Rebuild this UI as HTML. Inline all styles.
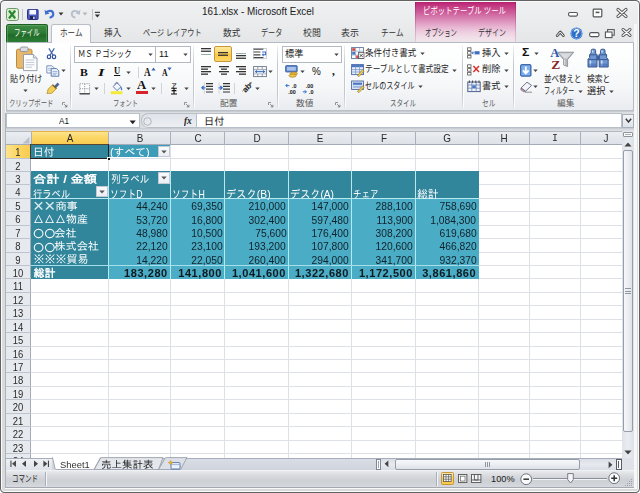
<!DOCTYPE html>
<html lang="ja"><head><meta charset="utf-8"><title>161.xlsx - Microsoft Excel</title>
<style>
html,body{margin:0;padding:0;background:#fff;}
body{width:640px;height:493px;overflow:hidden;position:relative;font-family:"Liberation Sans","Noto Sans CJK JP",sans-serif;}
#w{position:absolute;left:0;top:0;width:640px;height:493px;overflow:hidden;filter:blur(0.35px);}
#w div,#w span.t,#w svg{position:absolute;}
#w div{box-sizing:border-box;}
span.t{white-space:nowrap;display:block;}
</style></head>
<body><div id="w">
<div style="left:0px;top:0px;width:640px;height:493px;border-radius:4.5px;background:#636363;"></div>
<div style="left:0.8px;top:0.8px;width:638.4px;height:491.4px;border-radius:3.7px;background:#fbfbfb;"></div>
<div style="left:2.1px;top:2.1px;width:635.8px;height:488.9px;border-radius:2.6px;background:linear-gradient(#eff0f1 0px,#e9ebed 22px,#e3e5e7 45px,#dcdddf 115px,#d9dadc 100%);"></div>
<div style="left:4.6px;top:24px;width:0.8px;height:464px;background:#f3f3f4;"></div>
<div style="left:634.4px;top:24px;width:2.5px;height:464.6px;background:#f7f7f8;"></div>
<div style="left:5px;top:487.8px;width:632px;height:1.5px;background:#f8f8f9;"></div>
<span id="t1" class="t" style="left:202px;top:3.90px;height:15px;line-height:15px;font-size:11px;color:#1a1a1a;font-weight:normal;transform:scaleX(0.8981);transform-origin:0 50%;">161.xlsx  -  Microsoft Excel</span>
<svg style="left:566px;top:9px" width="14" height="10" viewBox="0 0 14 10"><rect x="2.5" y="3.5" width="9" height="3.6" rx="1.5" fill="#fff" stroke="#555" stroke-width="1.1"/></svg>
<svg style="left:591px;top:7px" width="13" height="12" viewBox="0 0 13 12"><rect x="2.2" y="2.2" width="8.6" height="7.6" rx="0.8" fill="#fff" stroke="#555" stroke-width="1.2"/><rect x="4.6" y="4.6" width="3.8" height="1.6" fill="#555"/></svg>
<svg style="left:615px;top:7px" width="14" height="12" viewBox="0 0 14 12"><path d="M3 2.5 L11 9.5 M11 2.5 L3 9.5" stroke="#555" stroke-width="3.2" stroke-linecap="round"/><path d="M3 2.5 L11 9.5 M11 2.5 L3 9.5" stroke="#fff" stroke-width="1.3" stroke-linecap="round"/></svg>
<svg style="left:6px;top:7.5px" width="13" height="13" viewBox="0 0 13 13"><rect x="0.6" y="0.6" width="11.8" height="11.8" rx="1.8" fill="#eef6ea" stroke="#5f9552" stroke-width="1"/><rect x="1.8" y="1.8" width="9.4" height="9.4" rx="0.8" fill="#d3ebcb"/><path d="M3 2.6 L9.2 10.4 M9.2 2.6 L3 10.4" stroke="#2c8630" stroke-width="2.3"/><path d="M10.4 2.4 V10.6" stroke="#f4faf2" stroke-width="1"/></svg>
<div style="left:22.3px;top:9px;width:1px;height:11px;background:#c4c4c4;"></div>
<svg style="left:27px;top:8.5px" width="12" height="11" viewBox="0 0 12 11"><rect x="0.5" y="0.5" width="10.6" height="10" rx="0.8" fill="#4a5bbd" stroke="#2c3688" stroke-width="1"/><rect x="2.4" y="0.9" width="6.6" height="4.6" fill="#f4f6ff"/><rect x="3" y="7" width="5.4" height="3.4" fill="#1d2460"/><rect x="6.2" y="7.6" width="1.4" height="2.4" fill="#e8e8f8"/></svg>
<svg style="left:43.5px;top:8px" width="12" height="11" viewBox="0 0 12 11"><path d="M2.2 4.6 C4.5 2.2 8.8 2.2 9.2 5.6 C9.4 7.8 7.6 9.2 5.6 9.6" fill="none" stroke="#3d6fd0" stroke-width="2.2"/><path d="M0.6 1.8 L1.2 6.8 L5.6 5.4 Z" fill="#3d6fd0"/></svg>
<svg style="left:57.5px;top:11.5px" width="6" height="4" viewBox="0 0 6 4"><path d="M0.6 0.6 L5.4 0.6 L3 3.4 Z" fill="#333"/></svg>
<svg style="left:68.5px;top:8px" width="12" height="11" viewBox="0 0 12 11"><path d="M9.8 4.6 C7.5 2.2 3.2 2.2 2.8 5.6 C2.6 7.8 4.4 9.2 6.4 9.6" fill="none" stroke="#b9c0cc" stroke-width="2"/><path d="M11.4 1.8 L10.8 6.8 L6.4 5.4 Z" fill="#b9c0cc"/></svg>
<svg style="left:82px;top:11.5px" width="6" height="4" viewBox="0 0 6 4"><path d="M0.6 0.6 L5.4 0.6 L3 3.4 Z" fill="#b5b5b5"/></svg>
<div style="left:91.6px;top:9px;width:1px;height:11px;background:#c4c4c4;"></div>
<svg style="left:94px;top:10.5px" width="7" height="8" viewBox="0 0 7 8"><rect x="0.8" y="0.8" width="5.2" height="1.1" fill="#333"/><path d="M0.8 3.4 L6 3.4 L3.4 6.4 Z" fill="#333"/></svg>
<div style="left:415px;top:1.5px;width:101px;height:41px;background:linear-gradient(#b5206f 0px,#c2357f 3px,#cc5a98 10px,#d985b3 17px,#e6b0cf 24px,#efd2e2 31px,#f1e2ea 37px,#f0e6ec 41px);"></div>
<div style="left:415px;top:1.5px;width:1px;height:41px;background:linear-gradient(#a01a63,#d9a5c2 70%,#e6cbd9);"></div>
<div style="left:515px;top:1.5px;width:1px;height:41px;background:linear-gradient(#a01a63,#d9a5c2 70%,#e6cbd9);"></div>
<span id="t2" class="t" style="left:423px;top:5.10px;height:13px;line-height:13px;font-size:9px;color:#fff;font-weight:normal;transform:scaleX(0.8220);transform-origin:0 50%;">ピボットテーブル ツール</span>
<div style="left:5.6px;top:24px;width:42.6px;height:18.6px;border-radius:2.5px 2.5px 0 0;background:linear-gradient(#3f8b45 0%,#2c7a33 45%,#1f6a27 55%,#2f8038 100%);border:1px solid #1d5e24;border-bottom:none;box-shadow:inset 0 0 0 0.6px rgba(180,230,180,.45);"></div>
<span id="t3" class="t" style="left:14px;top:26.70px;height:13px;line-height:13px;font-size:9px;color:#fff;font-weight:normal;transform:scaleX(0.7108);transform-origin:0 50%;">ファイル</span>
<div style="left:51px;top:24.4px;width:40px;height:19px;border-radius:2.5px 2.5px 0 0;background:#fcfcfd;border:1px solid #b9bfc7;border-bottom:none;"></div>
<span id="t4" class="t" style="left:60.3px;top:26.70px;height:13px;line-height:13px;font-size:9px;color:#333;font-weight:normal;transform:scaleX(0.8416);transform-origin:0 50%;">ホーム</span>
<span id="t5" class="t" style="left:104px;top:26.70px;height:13px;line-height:13px;font-size:9px;color:#333;font-weight:normal;transform:scaleX(0.9603);transform-origin:0 50%;">挿入</span>
<span id="t6" class="t" style="left:143px;top:26.70px;height:13px;line-height:13px;font-size:9px;color:#333;font-weight:normal;transform:scaleX(0.7871);transform-origin:0 50%;">ページ レイアウト</span>
<span id="t7" class="t" style="left:222.7px;top:26.70px;height:13px;line-height:13px;font-size:9px;color:#333;font-weight:normal;transform:scaleX(0.9603);transform-origin:0 50%;">数式</span>
<span id="t8" class="t" style="left:260.7px;top:26.70px;height:13px;line-height:13px;font-size:9px;color:#333;font-weight:normal;transform:scaleX(0.7884);transform-origin:0 50%;">データ</span>
<span id="t9" class="t" style="left:302.8px;top:26.70px;height:13px;line-height:13px;font-size:9px;color:#333;font-weight:normal;transform:scaleX(0.9880);transform-origin:0 50%;">校閲</span>
<span id="t10" class="t" style="left:341.4px;top:26.70px;height:13px;line-height:13px;font-size:9px;color:#333;font-weight:normal;transform:scaleX(0.9880);transform-origin:0 50%;">表示</span>
<span id="t11" class="t" style="left:380.5px;top:26.70px;height:13px;line-height:13px;font-size:9px;color:#333;font-weight:normal;transform:scaleX(0.8416);transform-origin:0 50%;">チーム</span>
<span id="t12" class="t" style="left:425px;top:26.70px;height:13px;line-height:13px;font-size:9px;color:#333;font-weight:normal;transform:scaleX(0.7109);transform-origin:0 50%;">オプション</span>
<span id="t13" class="t" style="left:478px;top:26.70px;height:13px;line-height:13px;font-size:9px;color:#333;font-weight:normal;transform:scaleX(0.7774);transform-origin:0 50%;">デザイン</span>
<svg style="left:555px;top:28.5px" width="11" height="9" viewBox="0 0 11 9"><path d="M2.2 6.6 L5.3 3 L8.4 6.6" fill="none" stroke="#555" stroke-width="2.8" stroke-linejoin="round" stroke-linecap="round"/><path d="M2.2 6.6 L5.3 3 L8.4 6.6" fill="none" stroke="#fff" stroke-width="1" stroke-linejoin="round" stroke-linecap="round"/></svg>
<svg style="left:569.5px;top:26.8px" width="13" height="13" viewBox="0 0 13 13"><circle cx="6.5" cy="6.5" r="6" fill="#2f6fc6"/><circle cx="6.5" cy="6.5" r="5.2" fill="none" stroke="#7fb0ee" stroke-width="0.8"/><text x="6.5" y="10.2" font-size="10.5" font-weight="bold" fill="#fff" text-anchor="middle" font-family="Liberation Sans,sans-serif">?</text></svg>
<svg style="left:587.5px;top:30.5px" width="13" height="8" viewBox="0 0 13 8"><rect x="1.6" y="1.6" width="9.4" height="4" rx="1.6" fill="#fff" stroke="#555" stroke-width="1.1"/></svg>
<svg style="left:604px;top:27.5px" width="12" height="11" viewBox="0 0 12 11"><rect x="3.6" y="1.6" width="6.6" height="5.6" fill="#fff" stroke="#555" stroke-width="1.1"/><rect x="1.4" y="4" width="6.6" height="5.6" fill="#fff" stroke="#555" stroke-width="1.1"/></svg>
<svg style="left:619.5px;top:26.5px" width="13" height="11" viewBox="0 0 13 11"><path d="M3 2.5 L10 8.5 M10 2.5 L3 8.5" stroke="#555" stroke-width="3" stroke-linecap="round"/><path d="M3 2.5 L10 8.5 M10 2.5 L3 8.5" stroke="#fff" stroke-width="1.2" stroke-linecap="round"/></svg>
<div style="left:5.6px;top:42.4px;width:628.2px;height:68.2px;background:linear-gradient(#ffffff 0px,#fcfdfd 20px,#f5f6f8 45px,#eff1f4 56px,#e9ecf0 67px);border:1px solid #b4bac3;border-radius:0 0 2px 2px;"></div>
<div style="left:52px;top:42px;width:38px;height:1.6px;background:#fdfdfe;"></div>
<div style="left:69.5px;top:45px;width:1px;height:62.5px;background:linear-gradient(rgba(190,196,205,0.2),#c3c8d0 30%,#c3c8d0 80%,rgba(190,196,205,0.3));"></div>
<div style="left:70.5px;top:45px;width:1px;height:62.5px;background:rgba(255,255,255,.8);"></div>
<div style="left:192.9px;top:45px;width:1px;height:62.5px;background:linear-gradient(rgba(190,196,205,0.2),#c3c8d0 30%,#c3c8d0 80%,rgba(190,196,205,0.3));"></div>
<div style="left:193.9px;top:45px;width:1px;height:62.5px;background:rgba(255,255,255,.8);"></div>
<div style="left:276.5px;top:45px;width:1px;height:62.5px;background:linear-gradient(rgba(190,196,205,0.2),#c3c8d0 30%,#c3c8d0 80%,rgba(190,196,205,0.3));"></div>
<div style="left:277.5px;top:45px;width:1px;height:62.5px;background:rgba(255,255,255,.8);"></div>
<div style="left:343.5px;top:45px;width:1px;height:62.5px;background:linear-gradient(rgba(190,196,205,0.2),#c3c8d0 30%,#c3c8d0 80%,rgba(190,196,205,0.3));"></div>
<div style="left:344.5px;top:45px;width:1px;height:62.5px;background:rgba(255,255,255,.8);"></div>
<div style="left:461.5px;top:45px;width:1px;height:62.5px;background:linear-gradient(rgba(190,196,205,0.2),#c3c8d0 30%,#c3c8d0 80%,rgba(190,196,205,0.3));"></div>
<div style="left:462.5px;top:45px;width:1px;height:62.5px;background:rgba(255,255,255,.8);"></div>
<div style="left:513.1px;top:45px;width:1px;height:62.5px;background:linear-gradient(rgba(190,196,205,0.2),#c3c8d0 30%,#c3c8d0 80%,rgba(190,196,205,0.3));"></div>
<div style="left:514.1px;top:45px;width:1px;height:62.5px;background:rgba(255,255,255,.8);"></div>
<svg style="left:15px;top:46px" width="24" height="26" viewBox="0 0 24 26"><rect x="1.5" y="3.2" width="15.5" height="19" rx="1.6" fill="#e9b769" stroke="#b98a3e" stroke-width="1"/>
<rect x="5.4" y="1" width="7.6" height="4.6" rx="1.4" fill="#d9dde3" stroke="#8b9099" stroke-width="0.9"/>
<path d="M8.5 8.5 H18.4 L22 12 V24.6 H8.5 Z" fill="#fdfdfe" stroke="#8d96a6" stroke-width="0.9"/>
<path d="M18.4 8.5 V12 H22" fill="#e3e8f0" stroke="#8d96a6" stroke-width="0.8"/>
<path d="M10.6 14 H19.4 M10.6 16.4 H19.4 M10.6 18.8 H19.4 M10.6 21.2 H17" stroke="#b9c2d0" stroke-width="0.9"/></svg>
<span id="t14" class="t" style="left:10px;top:72.90px;height:12.6px;line-height:12.6px;font-size:8.6px;color:#222;font-weight:normal;transform:scaleX(0.9421);transform-origin:0 50%;">貼り付け</span>
<svg style="left:23.1px;top:88.9px" width="5" height="3.4" viewBox="0 0 5 3.4"><path d="M0.3 0.4 L4.7 0.4 L2.5 3 Z" fill="#444"/></svg>
<svg style="left:46px;top:48px" width="11" height="12" viewBox="0 0 11 12"><path d="M3.2 0.8 L7 7 M8 0.8 L4.2 7" stroke="#4b6ea8" stroke-width="1.3" stroke-linecap="round"/>
<ellipse cx="3" cy="8.8" rx="1.7" ry="1.9" fill="none" stroke="#2f4f9c" stroke-width="1.2"/><ellipse cx="8" cy="8.8" rx="1.7" ry="1.9" fill="none" stroke="#2f4f9c" stroke-width="1.2"/></svg>
<svg style="left:45.5px;top:64.5px" width="14" height="12" viewBox="0 0 14 12"><path d="M0.8 0.8 H6 L8 2.8 V8 H0.8 Z" fill="#f4f7fc" stroke="#6f88b5" stroke-width="0.9"/><path d="M2 3.4 H6.4 M2 5.2 H6.4" stroke="#9ab0d4" stroke-width="0.8"/>
<path d="M5.2 3.6 H10.6 L12.8 5.8 V11.2 H5.2 Z" fill="#f4f7fc" stroke="#4f6fa8" stroke-width="0.9"/><path d="M6.6 6.4 H11.4 M6.6 8.2 H11.4 M6.6 9.8 H10" stroke="#7f9bcb" stroke-width="0.8"/></svg>
<svg style="left:60.7px;top:68.5px" width="5" height="3.4" viewBox="0 0 5 3.4"><path d="M0.3 0.4 L4.7 0.4 L2.5 3 Z" fill="#444"/></svg>
<svg style="left:45.5px;top:82px" width="14" height="13" viewBox="0 0 14 13"><path d="M8.2 4.6 L11.6 1 L13 2.4 L9.6 6 Z" fill="#4a5f9f" stroke="#2d3e78" stroke-width="0.6"/>
<path d="M2.2 7 L6.6 2.8 L10.4 6.6 L6.2 11 C4.8 11.8 2.4 11.2 1 11.6 C1.8 10.2 1.4 8.2 2.2 7 Z" fill="#f1cf5a" stroke="#b78f22" stroke-width="0.8"/><path d="M6.6 2.8 L10.4 6.6" stroke="#6f5a20" stroke-width="1.3"/></svg>
<span id="t15" class="t" style="left:9px;top:97.35px;height:12.5px;line-height:12.5px;font-size:8.5px;color:#5c5c5c;font-weight:normal;transform:scaleX(0.7460);transform-origin:0 50%;">クリップボード</span>
<svg style="left:61.5px;top:101.5px" width="6" height="6" viewBox="0 0 6 6"><path d="M0.5 3 V0.5 H3" fill="none" stroke="#888" stroke-width="0.9"/><path d="M2.2 2.2 L4.8 4.8 M4.9 2.8 V4.9 H2.8" fill="none" stroke="#777" stroke-width="0.9"/></svg>
<div style="left:74px;top:46.4px;width:81.6px;height:16.6px;background:#fff;border:1px solid #b3b9c2;"></div>
<div style="left:155px;top:46.4px;width:35.6px;height:16.6px;background:#fff;border:1px solid #b3b9c2;"></div>
<span id="t16" class="t" style="left:78.4px;top:47.50px;height:13px;line-height:13px;font-size:9px;color:#111;font-weight:normal;transform:scaleX(0.8181);transform-origin:0 50%;">ＭＳ Ｐゴシック</span>
<svg style="left:147.5px;top:53.1px" width="5" height="3.4" viewBox="0 0 5 3.4"><path d="M0.3 0.4 L4.7 0.4 L2.5 3 Z" fill="#444"/></svg>
<span id="t17" class="t" style="left:158.8px;top:47.45px;height:13.5px;line-height:13.5px;font-size:9.5px;color:#111;font-weight:normal;transform:scaleX(0.9722);transform-origin:0 50%;">11</span>
<svg style="left:182.9px;top:53.1px" width="5" height="3.4" viewBox="0 0 5 3.4"><path d="M0.3 0.4 L4.7 0.4 L2.5 3 Z" fill="#444"/></svg>
<span id="t18" class="t" style="left:79.6px;top:64.50px;height:15px;line-height:15px;font-size:11px;color:#111;font-weight:bold;font-family:'Liberation Serif',serif;transform:scaleX(1.0621);transform-origin:0 50%;">B</span>
<span id="t19" class="t" style="left:97.6px;top:64.50px;height:15px;line-height:15px;font-size:11px;color:#111;font-weight:bold;font-family:'Liberation Serif',serif;transform:scaleX(1.4949);transform-origin:0 50%;font-style:italic;">I</span>
<span id="t20" class="t" style="left:114.4px;top:64.35px;height:14.5px;line-height:14.5px;font-size:10.5px;color:#111;font-weight:bold;font-family:'Liberation Serif',serif;transform:scaleX(0.8165);transform-origin:0 50%;text-decoration:underline;">U</span>
<svg style="left:125.9px;top:70.5px" width="5" height="3.4" viewBox="0 0 5 3.4"><path d="M0.3 0.4 L4.7 0.4 L2.5 3 Z" fill="#444"/></svg>
<div style="left:137.8px;top:67px;width:1px;height:11px;background:#cfd3da;"></div>
<span id="t21" class="t" style="left:144.4px;top:64.20px;height:16px;line-height:16px;font-size:12px;color:#111;font-weight:bold;font-family:'Liberation Serif',serif;transform:scaleX(0.7611);transform-origin:0 50%;">A</span>
<svg style="left:150.5px;top:66.5px" width="5" height="4" viewBox="0 0 5 4"><path d="M0.4 3.4 L2.5 0.5 L4.6 3.4 Z" fill="#3a63b8"/></svg>
<span id="t22" class="t" style="left:162px;top:66.00px;height:14px;line-height:14px;font-size:10px;color:#111;font-weight:bold;font-family:'Liberation Serif',serif;transform:scaleX(0.7741);transform-origin:0 50%;">A</span>
<svg style="left:166.5px;top:66.5px" width="5" height="4" viewBox="0 0 5 4"><path d="M0.4 0.5 L2.5 3.4 L4.6 0.5 Z" fill="#3a63b8"/></svg>
<svg style="left:78.5px;top:82.5px" width="12" height="12" viewBox="0 0 12 12"><rect x="0.8" y="0.8" width="9.8" height="9.8" fill="#fff" stroke="#8a8f98" stroke-width="0.9" stroke-dasharray="1.2 1"/><path d="M5.7 0.8 V10.6 M0.8 5.7 H10.6" stroke="#8a8f98" stroke-width="0.9" stroke-dasharray="1.2 1"/><path d="M0.6 10.8 H10.8" stroke="#444" stroke-width="1.4"/></svg>
<svg style="left:93.9px;top:86.7px" width="5" height="3.4" viewBox="0 0 5 3.4"><path d="M0.3 0.4 L4.7 0.4 L2.5 3 Z" fill="#444"/></svg>
<div style="left:104.2px;top:83px;width:1px;height:11px;background:#cfd3da;"></div>
<svg style="left:110px;top:81px" width="14" height="14" viewBox="0 0 14 14"><path d="M3.2 5.6 L7 1.6 L11 5.8 L7 9.6 Z" fill="#f2f5fa" stroke="#5a6f9f" stroke-width="0.9"/><path d="M5 3.6 C5 1 8 0.6 8 3" fill="none" stroke="#5a6f9f" stroke-width="0.8"/>
<path d="M10.8 5.6 C12.4 7 12.8 8.6 11.8 9.4 C10.8 9.4 10.4 8 10.8 5.6 Z" fill="#3f7fd6"/>
<rect x="0.8" y="10.2" width="11.6" height="3" fill="#f4ea3a"/></svg>
<svg style="left:125.9px;top:86.7px" width="5" height="3.4" viewBox="0 0 5 3.4"><path d="M0.3 0.4 L4.7 0.4 L2.5 3 Z" fill="#444"/></svg>
<span id="t23" class="t" style="left:137.4px;top:78.25px;height:15.5px;line-height:15.5px;font-size:11.5px;color:#111;font-weight:bold;font-family:'Liberation Serif',serif;transform:scaleX(1.1068);transform-origin:0 50%;">A</span>
<div style="left:135.6px;top:91px;width:12px;height:3px;background:#d8232a;"></div>
<svg style="left:150.9px;top:86.7px" width="5" height="3.4" viewBox="0 0 5 3.4"><path d="M0.3 0.4 L4.7 0.4 L2.5 3 Z" fill="#444"/></svg>
<div style="left:161.2px;top:83px;width:1px;height:11px;background:#cfd3da;"></div>
<svg style="left:168.5px;top:81.5px" width="10" height="13" viewBox="0 0 10 13"><text x="5" y="4.6" font-size="5" font-weight="bold" text-anchor="middle" fill="#111" font-family="Liberation Sans,Noto Sans CJK JP,sans-serif">ア</text><path d="M2.2 6.2 H7.8 M5 6.2 V12 M2.6 8.6 H7.4 M2 12 H8" stroke="#111" stroke-width="1.1" fill="none"/></svg>
<svg style="left:183.5px;top:86.7px" width="5" height="3.4" viewBox="0 0 5 3.4"><path d="M0.3 0.4 L4.7 0.4 L2.5 3 Z" fill="#444"/></svg>
<span id="t24" class="t" style="left:113px;top:97.35px;height:12.5px;line-height:12.5px;font-size:8.5px;color:#5c5c5c;font-weight:normal;transform:scaleX(0.7350);transform-origin:0 50%;">フォント</span>
<svg style="left:184.1px;top:101.5px" width="6" height="6" viewBox="0 0 6 6"><path d="M0.5 3 V0.5 H3" fill="none" stroke="#888" stroke-width="0.9"/><path d="M2.2 2.2 L4.8 4.8 M4.9 2.8 V4.9 H2.8" fill="none" stroke="#777" stroke-width="0.9"/></svg>
<svg style="left:201px;top:48.2px" width="10" height="6.2" viewBox="0 0 10 6.2"><rect x="0" y="0.0" width="10" height="1.3" fill="#333"/><rect x="0" y="2.6" width="10" height="1.3" fill="#333"/></svg>
<div style="left:201px;top:53.6px;width:10px;height:0.8px;background:#9aa;"></div>
<div style="left:213.6px;top:45.8px;width:18.6px;height:16.6px;background:linear-gradient(#fde9a0,#fbd25e 50%,#f9c843 51%,#fbd86a);border:1px solid #c9963a;border-radius:2px;"></div>
<svg style="left:218px;top:52px" width="10" height="6.2" viewBox="0 0 10 6.2"><rect x="0" y="0.0" width="10" height="1.3" fill="#333"/><rect x="0" y="2.6" width="10" height="1.3" fill="#333"/></svg>
<svg style="left:236px;top:55px" width="10" height="6.2" viewBox="0 0 10 6.2"><rect x="0" y="0.0" width="10" height="1.3" fill="#333"/><rect x="0" y="2.6" width="10" height="1.3" fill="#333"/></svg>
<div style="left:236px;top:53px;width:10px;height:0.8px;background:#9aa;"></div>
<svg style="left:252.5px;top:47.5px" width="15" height="12" viewBox="0 0 15 12"><path d="M0.6 1.2 H10.4 M0.6 4 H7.4 M0.6 6.8 H7.4 M0.6 9.6 H10.4" stroke="#444" stroke-width="1.2"/><path d="M9 4 H12.6 V6.8 H10.2" fill="none" stroke="#3f6fc0" stroke-width="1.1"/><path d="M10.6 5.2 L8.6 6.8 L10.6 8.4 Z" fill="#3f6fc0"/><rect x="0.4" y="0.2" width="12.8" height="10.6" fill="none" stroke="#9aa1ad" stroke-width="0.5"/></svg>
<svg style="left:201px;top:66.2px" width="10" height="11.0" viewBox="0 0 10 11.0"><rect x="0" y="0.0" width="10" height="1.3" fill="#333"/><rect x="0" y="2.5" width="7" height="1.3" fill="#333"/><rect x="0" y="5.0" width="10" height="1.3" fill="#333"/><rect x="0" y="7.5" width="7" height="1.3" fill="#333"/></svg>
<svg style="left:218.6px;top:66.2px" width="10" height="11.0" viewBox="0 0 10 11.0"><rect x="0.0" y="0.0" width="10" height="1.3" fill="#333"/><rect x="2.0" y="2.5" width="6" height="1.3" fill="#333"/><rect x="0.0" y="5.0" width="10" height="1.3" fill="#333"/><rect x="2.0" y="7.5" width="6" height="1.3" fill="#333"/></svg>
<svg style="left:236px;top:66.2px" width="10" height="11.0" viewBox="0 0 10 11.0"><rect x="0" y="0.0" width="10" height="1.3" fill="#333"/><rect x="3" y="2.5" width="7" height="1.3" fill="#333"/><rect x="0" y="5.0" width="10" height="1.3" fill="#333"/><rect x="3" y="7.5" width="7" height="1.3" fill="#333"/></svg>
<svg style="left:252.5px;top:65.5px" width="15" height="12" viewBox="0 0 15 12"><rect x="0.6" y="0.6" width="12.8" height="10" fill="#fff" stroke="#6c7686" stroke-width="0.9"/><path d="M0.6 3.4 H13.4 M0.6 7.8 H13.4 M4.8 0.6 V3.4 M9.2 0.6 V3.4 M4.8 7.8 V10.6 M9.2 7.8 V10.6" stroke="#6c7686" stroke-width="0.7"/><rect x="1" y="3.8" width="12" height="3.6" fill="#dfeaf8"/><path d="M2.4 5.6 H11.6 M4 4.4 L2.4 5.6 L4 6.8 M10 4.4 L11.6 5.6 L10 6.8" stroke="#2f5fb0" stroke-width="0.9" fill="none"/></svg>
<svg style="left:267.9px;top:69.5px" width="5" height="3.4" viewBox="0 0 5 3.4"><path d="M0.3 0.4 L4.7 0.4 L2.5 3 Z" fill="#444"/></svg>
<svg style="left:200.5px;top:81.5px" width="13" height="13" viewBox="0 0 13 13"><path d="M5 1.6 H12 M5 4.4 H12 M5 7.2 H12 M5 10 H12" stroke="#333" stroke-width="1.2"/><path d="M4.4 5.8 H1 M2.6 4 L0.8 5.8 L2.6 7.6" stroke="#2f6fd0" stroke-width="1.2" fill="none"/><path d="M3.4 0.6 V11.4" stroke="#889" stroke-width="0.6" stroke-dasharray="1 1"/></svg>
<svg style="left:217.5px;top:81.5px" width="13" height="13" viewBox="0 0 13 13"><path d="M5 1.6 H12 M5 4.4 H12 M5 7.2 H12 M5 10 H12" stroke="#333" stroke-width="1.2"/><path d="M0.6 5.8 H4 M2.4 4 L4.2 5.8 L2.4 7.6" stroke="#2f6fd0" stroke-width="1.2" fill="none"/><path d="M1 0.6 V11.4" stroke="#889" stroke-width="0.6" stroke-dasharray="1 1"/></svg>
<div style="left:234px;top:83px;width:1px;height:11px;background:#cfd3da;"></div>
<svg style="left:240px;top:81px" width="14" height="14" viewBox="0 0 14 14"><g transform="rotate(-45 7 7)"><text x="7" y="9.4" font-size="8" text-anchor="middle" fill="#222" font-family="Liberation Sans,sans-serif" font-weight="bold">ab</text></g><path d="M2.4 10.2 L10.6 2" stroke="#555" stroke-width="0.8"/><path d="M11.8 1 L10.8 4 L8.8 2 Z" fill="#555"/></svg>
<svg style="left:254.5px;top:86.7px" width="5" height="3.4" viewBox="0 0 5 3.4"><path d="M0.3 0.4 L4.7 0.4 L2.5 3 Z" fill="#444"/></svg>
<span id="t25" class="t" style="left:220px;top:97.35px;height:12.5px;line-height:12.5px;font-size:8.5px;color:#5c5c5c;font-weight:normal;transform:scaleX(1.0226);transform-origin:0 50%;">配置</span>
<svg style="left:268.1px;top:101.5px" width="6" height="6" viewBox="0 0 6 6"><path d="M0.5 3 V0.5 H3" fill="none" stroke="#888" stroke-width="0.9"/><path d="M2.2 2.2 L4.8 4.8 M4.9 2.8 V4.9 H2.8" fill="none" stroke="#777" stroke-width="0.9"/></svg>
<div style="left:282px;top:46.4px;width:59.6px;height:16.4px;background:#fff;border:1px solid #b3b9c2;"></div>
<span id="t26" class="t" style="left:285px;top:47.70px;height:13px;line-height:13px;font-size:9px;color:#111;font-weight:normal;transform:scaleX(1.0213);transform-origin:0 50%;">標準</span>
<svg style="left:333.9px;top:53.1px" width="5" height="3.4" viewBox="0 0 5 3.4"><path d="M0.3 0.4 L4.7 0.4 L2.5 3 Z" fill="#444"/></svg>
<svg style="left:284.5px;top:64.5px" width="14" height="13" viewBox="0 0 14 13"><rect x="0.6" y="0.6" width="11.6" height="6.4" rx="0.8" fill="#5d86c9" stroke="#35569a" stroke-width="0.8"/><rect x="2" y="2" width="8.8" height="3.6" fill="#a9c3ea"/><ellipse cx="8.8" cy="8.6" rx="3.6" ry="1.6" fill="#e9b93c" stroke="#a67c14" stroke-width="0.7"/><ellipse cx="7.6" cy="10.6" rx="3.6" ry="1.6" fill="#f0c750" stroke="#a67c14" stroke-width="0.7"/></svg>
<svg style="left:299.9px;top:70.1px" width="5" height="3.4" viewBox="0 0 5 3.4"><path d="M0.3 0.4 L4.7 0.4 L2.5 3 Z" fill="#444"/></svg>
<span id="t27" class="t" style="left:311.6px;top:64.10px;height:15px;line-height:15px;font-size:11px;color:#111;font-weight:normal;transform:scaleX(0.8997);transform-origin:0 50%;">%</span>
<span id="t28" class="t" style="left:331.8px;top:61.90px;height:17px;line-height:17px;font-size:13px;color:#111;font-weight:bold;font-family:'Liberation Serif',serif;transform:scaleX(0.8615);transform-origin:0 50%;">,</span>
<svg style="left:284.5px;top:82.5px" width="13" height="12" viewBox="0 0 13 12"><path d="M4.4 2.6 H1 M2.4 1 L0.8 2.6 L2.4 4.2" stroke="#2f6fd0" stroke-width="1" fill="none"/><text x="9.2" y="5" font-size="5.4" font-weight="bold" text-anchor="middle" fill="#111" font-family="Liberation Sans,sans-serif">.0</text><text x="7" y="10.6" font-size="5.4" font-weight="bold" text-anchor="middle" fill="#111" font-family="Liberation Sans,sans-serif">.00</text></svg>
<svg style="left:302px;top:82.5px" width="13" height="12" viewBox="0 0 13 12"><text x="7.4" y="5" font-size="5.4" font-weight="bold" text-anchor="middle" fill="#111" font-family="Liberation Sans,sans-serif">.00</text><path d="M0.8 8.8 H4.2 M2.8 7.2 L4.4 8.8 L2.8 10.4" stroke="#2f6fd0" stroke-width="1" fill="none"/><text x="9.2" y="10.6" font-size="5.4" font-weight="bold" text-anchor="middle" fill="#111" font-family="Liberation Sans,sans-serif">.0</text></svg>
<span id="t29" class="t" style="left:296px;top:97.35px;height:12.5px;line-height:12.5px;font-size:8.5px;color:#5c5c5c;font-weight:normal;transform:scaleX(1.0226);transform-origin:0 50%;">数値</span>
<svg style="left:335.1px;top:101.5px" width="6" height="6" viewBox="0 0 6 6"><path d="M0.5 3 V0.5 H3" fill="none" stroke="#888" stroke-width="0.9"/><path d="M2.2 2.2 L4.8 4.8 M4.9 2.8 V4.9 H2.8" fill="none" stroke="#777" stroke-width="0.9"/></svg>
<svg style="left:350.5px;top:46.5px" width="14" height="13" viewBox="0 0 14 13"><rect x="0.6" y="0.6" width="11.8" height="11" fill="#fff" stroke="#59709c" stroke-width="0.9"/><path d="M0.6 4.2 H12.4 M0.6 8 H12.4 M4.6 0.6 V11.6 M8.6 0.6 V11.6" stroke="#8ea2c6" stroke-width="0.7"/><rect x="1.2" y="1.2" width="3" height="2.6" fill="#d8453a"/><rect x="1.2" y="4.8" width="3" height="2.8" fill="#4a76c4"/><rect x="5.2" y="8.6" width="3" height="2.6" fill="#d8453a"/><rect x="7.4" y="5.4" width="5.6" height="6" fill="#f4f6fa" stroke="#444" stroke-width="0.7"/><path d="M8.6 7.2 L11.8 9.8 M11.8 7.2 L8.6 9.8" stroke="#333" stroke-width="0.8"/></svg>
<svg style="left:350.5px;top:63.5px" width="14" height="13" viewBox="0 0 14 13"><rect x="0.6" y="0.6" width="11.8" height="10" fill="#e9f0fa" stroke="#4a66a0" stroke-width="0.9"/><rect x="0.6" y="0.6" width="11.8" height="2.6" fill="#4a76c4"/><path d="M0.6 5.6 H12.4 M0.6 8 H12.4 M4.6 0.6 V10.6 M8.6 0.6 V10.6" stroke="#6f8cc2" stroke-width="0.7"/><path d="M6.4 11.6 L11.6 5.6 L13.2 7 L8 12.6 Z" fill="#f1cf5a" stroke="#8a6a14" stroke-width="0.6"/></svg>
<svg style="left:350.5px;top:80px" width="14" height="13" viewBox="0 0 14 13"><rect x="0.6" y="1" width="11.8" height="8.4" fill="#dfe9f7" stroke="#4a66a0" stroke-width="0.9"/><rect x="2" y="2.6" width="9" height="2.2" fill="#4a76c4"/><rect x="2" y="5.8" width="9" height="2" fill="#9db7e2"/><path d="M6.4 11.6 L11.6 5.8 L13.2 7.2 L8 12.6 Z" fill="#f1cf5a" stroke="#8a6a14" stroke-width="0.6"/></svg>
<span id="t30" class="t" style="left:365px;top:46.80px;height:13px;line-height:13px;font-size:9px;color:#222;font-weight:normal;transform:scaleX(0.9516);transform-origin:0 50%;">条件付き書式</span>
<svg style="left:420.1px;top:52.4px" width="5" height="3.4" viewBox="0 0 5 3.4"><path d="M0.3 0.4 L4.7 0.4 L2.5 3 Z" fill="#444"/></svg>
<span id="t31" class="t" style="left:365px;top:63.30px;height:13px;line-height:13px;font-size:9px;color:#222;font-weight:normal;transform:scaleX(0.8513);transform-origin:0 50%;">テーブルとして書式設定</span>
<svg style="left:452.1px;top:68.89999999999999px" width="5" height="3.4" viewBox="0 0 5 3.4"><path d="M0.3 0.4 L4.7 0.4 L2.5 3 Z" fill="#444"/></svg>
<span id="t32" class="t" style="left:365px;top:79.70px;height:13px;line-height:13px;font-size:9px;color:#222;font-weight:normal;transform:scaleX(0.7871);transform-origin:0 50%;">セルのスタイル</span>
<svg style="left:418.1px;top:85.3px" width="5" height="3.4" viewBox="0 0 5 3.4"><path d="M0.3 0.4 L4.7 0.4 L2.5 3 Z" fill="#444"/></svg>
<span id="t33" class="t" style="left:390.4px;top:97.35px;height:12.5px;line-height:12.5px;font-size:8.5px;color:#5c5c5c;font-weight:normal;transform:scaleX(0.7644);transform-origin:0 50%;">スタイル</span>
<svg style="left:466.5px;top:47px" width="14" height="12" viewBox="0 0 14 12"><rect x="0.6" y="0.8" width="3.4" height="2.6" fill="#fff" stroke="#555" stroke-width="0.8"/><rect x="0.6" y="4.6" width="3.4" height="2.6" fill="#fff" stroke="#555" stroke-width="0.8"/><rect x="0.6" y="8.4" width="3.4" height="2.6" fill="#fff" stroke="#555" stroke-width="0.8"/><rect x="7.6" y="4.2" width="5" height="3.2" fill="#3f6fc0"/><path d="M7.4 5.8 H5 M6.2 4.4 L4.8 5.8 L6.2 7.2" stroke="#3f6fc0" stroke-width="0.9" fill="none"/></svg>
<svg style="left:466.5px;top:63.5px" width="14" height="12" viewBox="0 0 14 12"><rect x="0.6" y="0.8" width="3.4" height="2.6" fill="#fff" stroke="#555" stroke-width="0.8"/><rect x="0.6" y="4.6" width="3.4" height="2.6" fill="#fff" stroke="#555" stroke-width="0.8"/><rect x="0.6" y="8.4" width="3.4" height="2.6" fill="#fff" stroke="#555" stroke-width="0.8"/><path d="M6.4 2 L12 8 M12 2 L6.4 8" stroke="#d8332a" stroke-width="1.5"/></svg>
<svg style="left:466.5px;top:79.5px" width="15" height="13" viewBox="0 0 15 13"><rect x="0.8" y="2" width="12.4" height="9.6" fill="#eef3fb" stroke="#4a5f8c" stroke-width="1"/><path d="M0.8 5 H13.2 M0.8 8.2 H13.2 M4.8 2 V11.6 M9.2 2 V11.6" stroke="#6f86b5" stroke-width="0.8"/><rect x="5.2" y="5.4" width="3.6" height="2.6" fill="#4a76c4"/><path d="M2.4 0.4 V3 M5.6 0.4 V3 M8.8 0.4 V3 M12 0.4 V3" stroke="#333" stroke-width="0.8"/></svg>
<span id="t34" class="t" style="left:482px;top:46.80px;height:13px;line-height:13px;font-size:9px;color:#222;font-weight:normal;transform:scaleX(1.0213);transform-origin:0 50%;">挿入</span>
<svg style="left:504.1px;top:52.4px" width="5" height="3.4" viewBox="0 0 5 3.4"><path d="M0.3 0.4 L4.7 0.4 L2.5 3 Z" fill="#444"/></svg>
<span id="t35" class="t" style="left:482px;top:63.30px;height:13px;line-height:13px;font-size:9px;color:#222;font-weight:normal;transform:scaleX(1.0213);transform-origin:0 50%;">削除</span>
<svg style="left:504.1px;top:68.89999999999999px" width="5" height="3.4" viewBox="0 0 5 3.4"><path d="M0.3 0.4 L4.7 0.4 L2.5 3 Z" fill="#444"/></svg>
<span id="t36" class="t" style="left:482px;top:79.70px;height:13px;line-height:13px;font-size:9px;color:#222;font-weight:normal;transform:scaleX(1.0213);transform-origin:0 50%;">書式</span>
<svg style="left:504.1px;top:85.3px" width="5" height="3.4" viewBox="0 0 5 3.4"><path d="M0.3 0.4 L4.7 0.4 L2.5 3 Z" fill="#444"/></svg>
<span id="t37" class="t" style="left:482px;top:97.35px;height:12.5px;line-height:12.5px;font-size:8.5px;color:#5c5c5c;font-weight:normal;transform:scaleX(0.7875);transform-origin:0 50%;">セル</span>
<span id="t38" class="t" style="left:521.8px;top:46.00px;height:14px;line-height:14px;font-size:10px;color:#111;font-weight:bold;transform:scaleX(1.2301);transform-origin:0 50%;">Σ</span>
<svg style="left:534.1px;top:52.0px" width="5" height="3.4" viewBox="0 0 5 3.4"><path d="M0.3 0.4 L4.7 0.4 L2.5 3 Z" fill="#444"/></svg>
<svg style="left:519.5px;top:63.5px" width="12" height="13" viewBox="0 0 12 13"><rect x="0.6" y="0.6" width="10.4" height="11.6" rx="1" fill="#5b8fd8" stroke="#2d5597" stroke-width="0.9"/><rect x="1.6" y="1.6" width="8.4" height="9.6" fill="#7fb0ee"/><path d="M5.8 2.6 V8.8 M3 6.4 L5.8 9.4 L8.6 6.4" stroke="#fff" stroke-width="1.8" fill="none"/></svg>
<svg style="left:533.3px;top:68.7px" width="5" height="3.4" viewBox="0 0 5 3.4"><path d="M0.3 0.4 L4.7 0.4 L2.5 3 Z" fill="#444"/></svg>
<svg style="left:519.5px;top:80.5px" width="13" height="12" viewBox="0 0 13 12"><path d="M1 7 L7 1.2 L11.6 4.4 L5.6 10.2 Z" fill="#f3f5f9" stroke="#5a6580" stroke-width="0.9"/><path d="M1 7 L5.6 10.2 L4 11 L0.8 8.8 Z" fill="#d790a8" stroke="#5a6580" stroke-width="0.6"/><path d="M5 11.2 H12" stroke="#777" stroke-width="0.8"/></svg>
<svg style="left:533.3px;top:85.10000000000001px" width="5" height="3.4" viewBox="0 0 5 3.4"><path d="M0.3 0.4 L4.7 0.4 L2.5 3 Z" fill="#444"/></svg>
<svg style="left:549.5px;top:46px" width="25" height="24" viewBox="0 0 25 24"><path d="M7.2 6.2 H23.8 L17.6 13.6 V20.6 L13.6 19 V13.6 Z" fill="#b4b8be" stroke="#84898f" stroke-width="0.8"/><path d="M9.4 7.2 H21.6 L16.8 12.6 H14.4 Z" fill="#d9dce0"/><path d="M14.6 13.6 V18.8" stroke="#dfe1e4" stroke-width="1"/><text x="4.8" y="11" font-size="12.5" font-weight="bold" text-anchor="middle" fill="#2f55a8" font-family="Liberation Serif,serif">A</text><text x="5.8" y="23" font-size="13.5" font-weight="bold" text-anchor="middle" fill="#8a2626" font-family="Liberation Serif,serif">Z</text></svg>
<span id="t39" class="t" style="left:543.6px;top:73.10px;height:13px;line-height:13px;font-size:9px;color:#222;font-weight:normal;transform:scaleX(0.8308);transform-origin:0 50%;">並べ替えと</span>
<span id="t40" class="t" style="left:543.6px;top:84.70px;height:13px;line-height:13px;font-size:9px;color:#222;font-weight:normal;transform:scaleX(0.6737);transform-origin:0 50%;">フィルター</span>
<svg style="left:577.7px;top:90.1px" width="5" height="3.4" viewBox="0 0 5 3.4"><path d="M0.3 0.4 L4.7 0.4 L2.5 3 Z" fill="#444"/></svg>
<svg style="left:587.4px;top:47.6px" width="23" height="20" viewBox="0 0 23 20"><path d="M1 19 V11.4 L2.6 9.6 V6.6 L4.2 5.2 V2.6 Q4.2 1.2 5.6 1.2 H7.2 Q8.6 1.2 8.6 2.6 V5.2 L10 6.6 V19 Z" fill="#6f98d2" stroke="#2b4a82" stroke-width="0.9"/>
<path d="M12.2 19 V6.6 L13.6 5.2 V2.6 Q13.6 1.2 15 1.2 H16.6 Q18 1.2 18 2.6 V5.2 L19.6 6.6 V9.6 L21.2 11.4 V19 Z" fill="#6f98d2" stroke="#2b4a82" stroke-width="0.9"/>
<rect x="9.6" y="7.4" width="3" height="5" fill="#3f5f9c"/>
<path d="M1.4 11.6 H9.6 M12.6 11.6 H20.8 M3 6.8 H9.6 M12.6 6.8 H19.2" stroke="#2b4a82" stroke-width="0.8"/>
<path d="M3.4 12.6 V18 M14.8 12.6 V18 M5.6 2.4 V4.6 M15 2.4 V4.6" stroke="#cfe0f6" stroke-width="1.5"/>
<rect x="1.5" y="15.6" width="8" height="3" fill="#3f67b0" opacity=".55"/><rect x="12.7" y="15.6" width="8" height="3" fill="#3f67b0" opacity=".55"/></svg>
<span id="t41" class="t" style="left:587px;top:73.10px;height:13px;line-height:13px;font-size:9px;color:#222;font-weight:normal;transform:scaleX(0.8662);transform-origin:0 50%;">検索と</span>
<span id="t42" class="t" style="left:587px;top:84.70px;height:13px;line-height:13px;font-size:9px;color:#222;font-weight:normal;transform:scaleX(1.0213);transform-origin:0 50%;">選択</span>
<svg style="left:609.1px;top:90.1px" width="5" height="3.4" viewBox="0 0 5 3.4"><path d="M0.3 0.4 L4.7 0.4 L2.5 3 Z" fill="#444"/></svg>
<span id="t43" class="t" style="left:557px;top:97.35px;height:12.5px;line-height:12.5px;font-size:8.5px;color:#5c5c5c;font-weight:normal;transform:scaleX(1.0226);transform-origin:0 50%;">編集</span>
<div style="left:5.6px;top:113px;width:134px;height:15.4px;background:#fff;border:1px solid #b9bfc8;"></div>
<span id="t44" class="t" style="left:58.6px;top:114.05px;height:13.5px;line-height:13.5px;font-size:9.5px;color:#111;font-weight:normal;transform:scaleX(0.8602);transform-origin:0 50%;">A1</span>
<svg style="left:128.5px;top:119.6px" width="8" height="5" viewBox="0 0 8 5"><path d="M0.6 0.6 L6.8 0.6 L3.7 4.2 Z" fill="#222"/></svg>
<div style="left:141px;top:113.4px;width:55px;height:14.8px;border-radius:7.3px 0 0 7.3px;background:linear-gradient(#dfe2e8,#e6e9ee 50%,#eceef2);border:1px solid #b9bfc8;border-right:none;"></div>
<svg style="left:143px;top:116.6px" width="9" height="9" viewBox="0 0 9 9"><circle cx="4.5" cy="4.5" r="3.8" fill="#e6e9ee" stroke="#aab0ba" stroke-width="0.9"/></svg>
<span id="t45" class="t" style="left:183.6px;top:114.00px;height:14px;line-height:14px;font-size:10px;color:#222;font-weight:bold;font-family:'Liberation Serif',serif;transform:scaleX(0.9348);transform-origin:0 50%;font-style:italic;">fx</span>
<div style="left:195.8px;top:113px;width:426.2px;height:15.4px;background:#fff;border:1px solid #b9bfc8;"></div>
<span id="t46" class="t" style="left:204px;top:113.75px;height:14.5px;line-height:14.5px;font-size:10.5px;color:#111;font-weight:normal;font-family:'Liberation Sans','IPAGothic','Noto Sans CJK JP',sans-serif;transform:scaleX(0.9714);transform-origin:0 50%;">日付</span>
<div style="left:622px;top:113.6px;width:11.6px;height:14.4px;background:linear-gradient(#f4f5f8,#dfe3ea);border:1px solid #a9b0bb;"></div>
<svg style="left:624.5px;top:118px" width="7" height="5.4" viewBox="0 0 7 5.4"><path d="M0.8 0.8 L3.5 4 L6.2 0.8" fill="none" stroke="#333" stroke-width="1.4"/></svg>
<div style="left:5.6px;top:110px;width:628.2px;height:2px;background:linear-gradient(#b6bbc3,#cdd0d6);"></div>
<div style="left:5.6px;top:128.4px;width:628.2px;height:2.8px;background:linear-gradient(#c2c6cd,#d6d9de 45%,#dcdfe4);"></div>
<div style="left:6.4px;top:131px;width:615.6px;height:326.8px;background:#fff;overflow:hidden;"></div>
<div style="left:31px;top:157.53px;width:591px;height:1px;background:#dde0e5;"></div>
<div style="left:31px;top:170.95999999999998px;width:591px;height:1px;background:#dde0e5;"></div>
<div style="left:31px;top:184.39px;width:591px;height:1px;background:#dde0e5;"></div>
<div style="left:31px;top:197.82px;width:591px;height:1px;background:#dde0e5;"></div>
<div style="left:31px;top:211.25px;width:591px;height:1px;background:#dde0e5;"></div>
<div style="left:31px;top:224.68px;width:591px;height:1px;background:#dde0e5;"></div>
<div style="left:31px;top:238.10999999999999px;width:591px;height:1px;background:#dde0e5;"></div>
<div style="left:31px;top:251.54px;width:591px;height:1px;background:#dde0e5;"></div>
<div style="left:31px;top:264.97px;width:591px;height:1px;background:#dde0e5;"></div>
<div style="left:31px;top:278.4px;width:591px;height:1px;background:#dde0e5;"></div>
<div style="left:31px;top:291.83px;width:591px;height:1px;background:#dde0e5;"></div>
<div style="left:31px;top:305.26px;width:591px;height:1px;background:#dde0e5;"></div>
<div style="left:31px;top:318.69px;width:591px;height:1px;background:#dde0e5;"></div>
<div style="left:31px;top:332.12px;width:591px;height:1px;background:#dde0e5;"></div>
<div style="left:31px;top:345.54999999999995px;width:591px;height:1px;background:#dde0e5;"></div>
<div style="left:31px;top:358.98px;width:591px;height:1px;background:#dde0e5;"></div>
<div style="left:31px;top:372.40999999999997px;width:591px;height:1px;background:#dde0e5;"></div>
<div style="left:31px;top:385.84000000000003px;width:591px;height:1px;background:#dde0e5;"></div>
<div style="left:31px;top:399.27px;width:591px;height:1px;background:#dde0e5;"></div>
<div style="left:31px;top:412.70000000000005px;width:591px;height:1px;background:#dde0e5;"></div>
<div style="left:31px;top:426.13px;width:591px;height:1px;background:#dde0e5;"></div>
<div style="left:31px;top:439.55999999999995px;width:591px;height:1px;background:#dde0e5;"></div>
<div style="left:31px;top:452.99px;width:591px;height:1px;background:#dde0e5;"></div>
<div style="left:108.1px;top:144.6px;width:1px;height:313.20000000000005px;background:#dde0e5;"></div>
<div style="left:169.9px;top:144.6px;width:1px;height:313.20000000000005px;background:#dde0e5;"></div>
<div style="left:224.1px;top:144.6px;width:1px;height:313.20000000000005px;background:#dde0e5;"></div>
<div style="left:288.1px;top:144.6px;width:1px;height:313.20000000000005px;background:#dde0e5;"></div>
<div style="left:351.1px;top:144.6px;width:1px;height:313.20000000000005px;background:#dde0e5;"></div>
<div style="left:415.1px;top:144.6px;width:1px;height:313.20000000000005px;background:#dde0e5;"></div>
<div style="left:478.3px;top:144.6px;width:1px;height:313.20000000000005px;background:#dde0e5;"></div>
<div style="left:529.1px;top:144.6px;width:1px;height:313.20000000000005px;background:#dde0e5;"></div>
<div style="left:580.1px;top:144.6px;width:1px;height:313.20000000000005px;background:#dde0e5;"></div>
<div style="left:6.4px;top:131px;width:615.6px;height:14.199999999999994px;background:linear-gradient(#eceef2,#e3e6eb 55%,#dee1e7);border-top:1px solid #b4bac4;border-bottom:1px solid #a4abb7;"></div>
<div style="left:6.4px;top:144.6px;width:24.6px;height:313.20000000000005px;background:#e6e9ee;border-right:1px solid #a4abb7;"></div>
<div style="left:31px;top:131px;width:77.6px;height:13.599999999999994px;background:linear-gradient(#fde38f,#fcd766 45%,#f9cb50);border-top:1px solid #e6b347;border-bottom:1px solid #c9953a;"></div>
<div style="left:6.4px;top:144.6px;width:24.6px;height:13.43px;background:linear-gradient(90deg,#fde38f,#fcd766 45%,#f9cb50);border-right:1px solid #c9953a;"></div>
<div style="left:30.5px;top:132px;width:1px;height:12.599999999999994px;background:#a9b0bc;"></div>
<div style="left:108.1px;top:132px;width:1px;height:12.599999999999994px;background:#a9b0bc;"></div>
<div style="left:169.9px;top:132px;width:1px;height:12.599999999999994px;background:#a9b0bc;"></div>
<div style="left:224.1px;top:132px;width:1px;height:12.599999999999994px;background:#a9b0bc;"></div>
<div style="left:288.1px;top:132px;width:1px;height:12.599999999999994px;background:#a9b0bc;"></div>
<div style="left:351.1px;top:132px;width:1px;height:12.599999999999994px;background:#a9b0bc;"></div>
<div style="left:415.1px;top:132px;width:1px;height:12.599999999999994px;background:#a9b0bc;"></div>
<div style="left:478.3px;top:132px;width:1px;height:12.599999999999994px;background:#a9b0bc;"></div>
<div style="left:529.1px;top:132px;width:1px;height:12.599999999999994px;background:#a9b0bc;"></div>
<div style="left:580.1px;top:132px;width:1px;height:12.599999999999994px;background:#a9b0bc;"></div>
<div style="left:6.4px;top:157.53px;width:24.6px;height:1px;background:#bec4ce;"></div>
<div style="left:6.4px;top:170.95999999999998px;width:24.6px;height:1px;background:#bec4ce;"></div>
<div style="left:6.4px;top:184.39px;width:24.6px;height:1px;background:#bec4ce;"></div>
<div style="left:6.4px;top:197.82px;width:24.6px;height:1px;background:#bec4ce;"></div>
<div style="left:6.4px;top:211.25px;width:24.6px;height:1px;background:#bec4ce;"></div>
<div style="left:6.4px;top:224.68px;width:24.6px;height:1px;background:#bec4ce;"></div>
<div style="left:6.4px;top:238.10999999999999px;width:24.6px;height:1px;background:#bec4ce;"></div>
<div style="left:6.4px;top:251.54px;width:24.6px;height:1px;background:#bec4ce;"></div>
<div style="left:6.4px;top:264.97px;width:24.6px;height:1px;background:#bec4ce;"></div>
<div style="left:6.4px;top:278.4px;width:24.6px;height:1px;background:#bec4ce;"></div>
<div style="left:6.4px;top:291.83px;width:24.6px;height:1px;background:#bec4ce;"></div>
<div style="left:6.4px;top:305.26px;width:24.6px;height:1px;background:#bec4ce;"></div>
<div style="left:6.4px;top:318.69px;width:24.6px;height:1px;background:#bec4ce;"></div>
<div style="left:6.4px;top:332.12px;width:24.6px;height:1px;background:#bec4ce;"></div>
<div style="left:6.4px;top:345.54999999999995px;width:24.6px;height:1px;background:#bec4ce;"></div>
<div style="left:6.4px;top:358.98px;width:24.6px;height:1px;background:#bec4ce;"></div>
<div style="left:6.4px;top:372.40999999999997px;width:24.6px;height:1px;background:#bec4ce;"></div>
<div style="left:6.4px;top:385.84000000000003px;width:24.6px;height:1px;background:#bec4ce;"></div>
<div style="left:6.4px;top:399.27px;width:24.6px;height:1px;background:#bec4ce;"></div>
<div style="left:6.4px;top:412.70000000000005px;width:24.6px;height:1px;background:#bec4ce;"></div>
<div style="left:6.4px;top:426.13px;width:24.6px;height:1px;background:#bec4ce;"></div>
<div style="left:6.4px;top:439.55999999999995px;width:24.6px;height:1px;background:#bec4ce;"></div>
<div style="left:6.4px;top:452.99px;width:24.6px;height:1px;background:#bec4ce;"></div>
<svg style="left:21.5px;top:135.5px" width="8" height="8" viewBox="0 0 8 8"><path d="M7.4 0.8 V7.4 H0.8 Z" fill="#b9bfc9"/></svg>
<span id="t47" class="t" style="left:-30.200000000000003px;width:200px;text-align:center;transform:scaleX(0.9);transform-origin:50% 50%;top:130.70px;height:15px;line-height:15px;font-size:11px;color:#2a2a2a;font-weight:normal;">A</span>
<span id="t48" class="t" style="left:39.5px;width:200px;text-align:center;transform:scaleX(0.9);transform-origin:50% 50%;top:130.70px;height:15px;line-height:15px;font-size:11px;color:#2a2a2a;font-weight:normal;">B</span>
<span id="t49" class="t" style="left:97.5px;width:200px;text-align:center;transform:scaleX(0.9);transform-origin:50% 50%;top:130.70px;height:15px;line-height:15px;font-size:11px;color:#2a2a2a;font-weight:normal;">C</span>
<span id="t50" class="t" style="left:156.60000000000002px;width:200px;text-align:center;transform:scaleX(0.9);transform-origin:50% 50%;top:130.70px;height:15px;line-height:15px;font-size:11px;color:#2a2a2a;font-weight:normal;">D</span>
<span id="t51" class="t" style="left:220.10000000000002px;width:200px;text-align:center;transform:scaleX(0.9);transform-origin:50% 50%;top:130.70px;height:15px;line-height:15px;font-size:11px;color:#2a2a2a;font-weight:normal;">E</span>
<span id="t52" class="t" style="left:283.6px;width:200px;text-align:center;transform:scaleX(0.9);transform-origin:50% 50%;top:130.70px;height:15px;line-height:15px;font-size:11px;color:#2a2a2a;font-weight:normal;">F</span>
<span id="t53" class="t" style="left:347.20000000000005px;width:200px;text-align:center;transform:scaleX(0.9);transform-origin:50% 50%;top:130.70px;height:15px;line-height:15px;font-size:11px;color:#2a2a2a;font-weight:normal;">G</span>
<span id="t54" class="t" style="left:404.20000000000005px;width:200px;text-align:center;transform:scaleX(0.9);transform-origin:50% 50%;top:130.70px;height:15px;line-height:15px;font-size:11px;color:#2a2a2a;font-weight:normal;">H</span>
<span id="t55" class="t" style="left:455.1px;width:200px;text-align:center;transform:scaleX(0.9);transform-origin:50% 50%;top:130.70px;height:15px;line-height:15px;font-size:11px;color:#2a2a2a;font-weight:normal;font-family:'Liberation Mono',monospace;">I</span>
<span id="t56" class="t" style="left:505.6px;width:200px;text-align:center;transform:scaleX(0.9);transform-origin:50% 50%;top:130.70px;height:15px;line-height:15px;font-size:11px;color:#2a2a2a;font-weight:normal;">J</span>
<span id="t57" class="t" style="left:-81.6px;width:200px;text-align:center;transform:scaleX(0.9);transform-origin:50% 50%;top:145.16px;height:14.5px;line-height:14.5px;font-size:10.5px;color:#2a2a2a;font-weight:normal;">1</span>
<span id="t58" class="t" style="left:-81.6px;width:200px;text-align:center;transform:scaleX(0.9);transform-origin:50% 50%;top:158.59px;height:14.5px;line-height:14.5px;font-size:10.5px;color:#2a2a2a;font-weight:normal;">2</span>
<span id="t59" class="t" style="left:-81.6px;width:200px;text-align:center;transform:scaleX(0.9);transform-origin:50% 50%;top:172.02px;height:14.5px;line-height:14.5px;font-size:10.5px;color:#2a2a2a;font-weight:normal;">3</span>
<span id="t60" class="t" style="left:-81.6px;width:200px;text-align:center;transform:scaleX(0.9);transform-origin:50% 50%;top:185.45px;height:14.5px;line-height:14.5px;font-size:10.5px;color:#2a2a2a;font-weight:normal;">4</span>
<span id="t61" class="t" style="left:-81.6px;width:200px;text-align:center;transform:scaleX(0.9);transform-origin:50% 50%;top:198.88px;height:14.5px;line-height:14.5px;font-size:10.5px;color:#2a2a2a;font-weight:normal;">5</span>
<span id="t62" class="t" style="left:-81.6px;width:200px;text-align:center;transform:scaleX(0.9);transform-origin:50% 50%;top:212.31px;height:14.5px;line-height:14.5px;font-size:10.5px;color:#2a2a2a;font-weight:normal;">6</span>
<span id="t63" class="t" style="left:-81.6px;width:200px;text-align:center;transform:scaleX(0.9);transform-origin:50% 50%;top:225.75px;height:14.5px;line-height:14.5px;font-size:10.5px;color:#2a2a2a;font-weight:normal;">7</span>
<span id="t64" class="t" style="left:-81.6px;width:200px;text-align:center;transform:scaleX(0.9);transform-origin:50% 50%;top:239.17px;height:14.5px;line-height:14.5px;font-size:10.5px;color:#2a2a2a;font-weight:normal;">8</span>
<span id="t65" class="t" style="left:-81.6px;width:200px;text-align:center;transform:scaleX(0.9);transform-origin:50% 50%;top:252.61px;height:14.5px;line-height:14.5px;font-size:10.5px;color:#2a2a2a;font-weight:normal;">9</span>
<span id="t66" class="t" style="left:-81.6px;width:200px;text-align:center;transform:scaleX(0.9);transform-origin:50% 50%;top:266.04px;height:14.5px;line-height:14.5px;font-size:10.5px;color:#2a2a2a;font-weight:normal;">10</span>
<span id="t67" class="t" style="left:-81.6px;width:200px;text-align:center;transform:scaleX(0.9);transform-origin:50% 50%;top:279.46px;height:14.5px;line-height:14.5px;font-size:10.5px;color:#2a2a2a;font-weight:normal;">11</span>
<span id="t68" class="t" style="left:-81.6px;width:200px;text-align:center;transform:scaleX(0.9);transform-origin:50% 50%;top:292.89px;height:14.5px;line-height:14.5px;font-size:10.5px;color:#2a2a2a;font-weight:normal;">12</span>
<span id="t69" class="t" style="left:-81.6px;width:200px;text-align:center;transform:scaleX(0.9);transform-origin:50% 50%;top:306.32px;height:14.5px;line-height:14.5px;font-size:10.5px;color:#2a2a2a;font-weight:normal;">13</span>
<span id="t70" class="t" style="left:-81.6px;width:200px;text-align:center;transform:scaleX(0.9);transform-origin:50% 50%;top:319.75px;height:14.5px;line-height:14.5px;font-size:10.5px;color:#2a2a2a;font-weight:normal;">14</span>
<span id="t71" class="t" style="left:-81.6px;width:200px;text-align:center;transform:scaleX(0.9);transform-origin:50% 50%;top:333.19px;height:14.5px;line-height:14.5px;font-size:10.5px;color:#2a2a2a;font-weight:normal;">15</span>
<span id="t72" class="t" style="left:-81.6px;width:200px;text-align:center;transform:scaleX(0.9);transform-origin:50% 50%;top:346.61px;height:14.5px;line-height:14.5px;font-size:10.5px;color:#2a2a2a;font-weight:normal;">16</span>
<span id="t73" class="t" style="left:-81.6px;width:200px;text-align:center;transform:scaleX(0.9);transform-origin:50% 50%;top:360.05px;height:14.5px;line-height:14.5px;font-size:10.5px;color:#2a2a2a;font-weight:normal;">17</span>
<span id="t74" class="t" style="left:-81.6px;width:200px;text-align:center;transform:scaleX(0.9);transform-origin:50% 50%;top:373.47px;height:14.5px;line-height:14.5px;font-size:10.5px;color:#2a2a2a;font-weight:normal;">18</span>
<span id="t75" class="t" style="left:-81.6px;width:200px;text-align:center;transform:scaleX(0.9);transform-origin:50% 50%;top:386.91px;height:14.5px;line-height:14.5px;font-size:10.5px;color:#2a2a2a;font-weight:normal;">19</span>
<span id="t76" class="t" style="left:-81.6px;width:200px;text-align:center;transform:scaleX(0.9);transform-origin:50% 50%;top:400.33px;height:14.5px;line-height:14.5px;font-size:10.5px;color:#2a2a2a;font-weight:normal;">20</span>
<span id="t77" class="t" style="left:-81.6px;width:200px;text-align:center;transform:scaleX(0.9);transform-origin:50% 50%;top:413.77px;height:14.5px;line-height:14.5px;font-size:10.5px;color:#2a2a2a;font-weight:normal;">21</span>
<span id="t78" class="t" style="left:-81.6px;width:200px;text-align:center;transform:scaleX(0.9);transform-origin:50% 50%;top:427.19px;height:14.5px;line-height:14.5px;font-size:10.5px;color:#2a2a2a;font-weight:normal;">22</span>
<span id="t79" class="t" style="left:-81.6px;width:200px;text-align:center;transform:scaleX(0.9);transform-origin:50% 50%;top:440.62px;height:14.5px;line-height:14.5px;font-size:10.5px;color:#2a2a2a;font-weight:normal;">23</span>
<div style="left:6.4px;top:453.49px;width:24px;height:4.310000000000002px;overflow:hidden;background:transparent;"><span class="t" style="left:0;width:24.6px;text-align:center;top:1.6px;font-size:10px;line-height:12px;color:#2a2a2a;font-size:11px;transform:scaleX(0.9)">24</span></div>
<div style="left:31px;top:144.6px;width:77.6px;height:13.43px;background:#31869b;"></div>
<div style="left:108.6px;top:145.2px;width:61.80000000000001px;height:12.23px;background:#3d9cb8;"></div>
<div style="left:31px;top:171.05999999999997px;width:448.2px;height:27.259999999999998px;background:#31869b;"></div>
<div style="left:31px;top:198.32px;width:77.6px;height:80.58px;background:#31869b;"></div>
<div style="left:108.6px;top:198.32px;width:370.6px;height:80.58px;background:#4bacc6;"></div>
<div style="left:107.89999999999999px;top:171.05999999999997px;width:1.4px;height:107.84px;background:#b7e9f3;"></div>
<div style="left:169.70000000000002px;top:171.05999999999997px;width:1.4px;height:107.84px;background:#b7e9f3;"></div>
<div style="left:223.9px;top:171.05999999999997px;width:1.4px;height:107.84px;background:#b7e9f3;"></div>
<div style="left:287.90000000000003px;top:171.05999999999997px;width:1.4px;height:107.84px;background:#b7e9f3;"></div>
<div style="left:350.90000000000003px;top:171.05999999999997px;width:1.4px;height:107.84px;background:#b7e9f3;"></div>
<div style="left:414.90000000000003px;top:171.05999999999997px;width:1.4px;height:107.84px;background:#b7e9f3;"></div>
<div style="left:31px;top:197.51999999999998px;width:448.2px;height:1.5px;background:#b7e9f3;"></div>
<div style="left:31px;top:264.67px;width:448.2px;height:1.4px;background:#a5dfec;"></div>
<div style="left:30.4px;top:144.0px;width:79.1px;height:14.93px;border-style:solid;border-color:#5a4630 #231d1c #231d1c #3a3a3a;border-width:1px 1.6px 1.7px 0.9px;background:transparent;"></div>
<div style="left:107.39999999999999px;top:157.03px;width:3.0px;height:3.0px;background:#111;border-top:0.6px solid #fff;border-left:0.6px solid #fff;"></div>
<div style="left:158.4px;top:145.5px;width:11.8px;height:11.6px;background:linear-gradient(#f9fafc,#eaeef3);border:0.6px solid #c3cad5;"></div>
<svg style="left:161.4px;top:149.5px" width="6" height="4" viewBox="0 0 6 4"><path d="M0.3 0.4 L5.7 0.4 L3 3.4 Z" fill="#555"/></svg>
<div style="left:158.4px;top:172.05999999999997px;width:11.8px;height:11.6px;background:linear-gradient(#f9fafc,#eaeef3);border:0.6px solid #c3cad5;"></div>
<svg style="left:161.4px;top:176.05999999999997px" width="6" height="4" viewBox="0 0 6 4"><path d="M0.3 0.4 L5.7 0.4 L3 3.4 Z" fill="#555"/></svg>
<div style="left:96.4px;top:185.69px;width:11.8px;height:11.6px;background:linear-gradient(#f9fafc,#eaeef3);border:0.6px solid #c3cad5;"></div>
<svg style="left:99.4px;top:189.69px" width="6" height="4" viewBox="0 0 6 4"><path d="M0.3 0.4 L5.7 0.4 L3 3.4 Z" fill="#555"/></svg>
<span id="t80" class="t" style="left:33.4px;top:146.01px;height:13px;line-height:13px;font-size:11px;color:#fff;font-weight:normal;font-family:'Liberation Sans','IPAGothic','Noto Sans CJK JP',sans-serif;transform:scaleX(0.9727);transform-origin:0 50%;">日付</span>
<span id="t81" class="t" style="left:110.4px;top:146.01px;height:13px;line-height:13px;font-size:11px;color:#fff;font-weight:normal;font-family:'Liberation Sans','IPAGothic','Noto Sans CJK JP',sans-serif;transform:scaleX(0.9819);transform-origin:0 50%;">(すべて)</span>
<span id="t82" class="t" style="left:33.4px;top:172.67px;height:13px;line-height:13px;font-size:11px;color:#fff;font-weight:bold;font-family:'Liberation Sans','IPAGothic','Noto Sans CJK JP',sans-serif;transform:scaleX(1.2036);transform-origin:0 50%;">合計 / 金額</span>
<span id="t83" class="t" style="left:111px;top:172.87px;height:13px;line-height:13px;font-size:11px;color:#fff;font-weight:normal;font-family:'Liberation Sans','IPAGothic','Noto Sans CJK JP',sans-serif;transform:scaleX(0.8727);transform-origin:0 50%;">列ラベル</span>
<span id="t84" class="t" style="left:33.4px;top:187.50px;height:13px;line-height:13px;font-size:11px;color:#fff;font-weight:normal;font-family:'Liberation Sans','IPAGothic','Noto Sans CJK JP',sans-serif;transform:scaleX(0.8455);transform-origin:0 50%;">行ラベル</span>
<span id="t85" class="t" style="left:110.0px;top:187.50px;height:13px;line-height:13px;font-size:11px;color:#fff;font-weight:normal;font-family:'Liberation Sans','IPAGothic','Noto Sans CJK JP',sans-serif;transform:scaleX(0.7960);transform-origin:0 50%;">ソフトD</span>
<span id="t86" class="t" style="left:172.0px;top:187.50px;height:13px;line-height:13px;font-size:11px;color:#fff;font-weight:normal;font-family:'Liberation Sans','IPAGothic','Noto Sans CJK JP',sans-serif;transform:scaleX(0.8009);transform-origin:0 50%;">ソフトH</span>
<span id="t87" class="t" style="left:226.0px;top:187.50px;height:13px;line-height:13px;font-size:11px;color:#fff;font-weight:normal;font-family:'Liberation Sans','IPAGothic','Noto Sans CJK JP',sans-serif;transform:scaleX(0.9356);transform-origin:0 50%;">デスク(B)</span>
<span id="t88" class="t" style="left:290.0px;top:187.50px;height:13px;line-height:13px;font-size:11px;color:#fff;font-weight:normal;font-family:'Liberation Sans','IPAGothic','Noto Sans CJK JP',sans-serif;transform:scaleX(0.9230);transform-origin:0 50%;">デスク(A)</span>
<span id="t89" class="t" style="left:352.79999999999995px;top:187.50px;height:13px;line-height:13px;font-size:11px;color:#fff;font-weight:normal;font-family:'Liberation Sans','IPAGothic','Noto Sans CJK JP',sans-serif;transform:scaleX(0.7758);transform-origin:0 50%;">チェア</span>
<span id="t90" class="t" style="left:416.79999999999995px;top:187.50px;height:13px;line-height:13px;font-size:11px;color:#fff;font-weight:normal;font-family:'Liberation Sans','IPAGothic','Noto Sans CJK JP',sans-serif;transform:scaleX(0.9818);transform-origin:0 50%;">総計</span>
<span id="t91" class="t" style="left:32.6px;top:199.73px;height:13px;line-height:13px;font-size:11px;color:#fff;font-weight:normal;font-family:'Liberation Sans','IPAGothic','Noto Sans CJK JP',sans-serif;transform:scaleX(1.0182);transform-origin:0 50%;"><span style="display:inline-block;width:11px;height:13px;line-height:13px;text-align:center;font-size:18.5px;vertical-align:top;color:rgba(255,255,255,.82);position:relative;top:-0.9px">×</span><span style="display:inline-block;width:11px;height:13px;line-height:13px;text-align:center;font-size:18.5px;vertical-align:top;color:rgba(255,255,255,.82);position:relative;top:-0.9px">×</span>商事</span>
<span id="t92" class="t" style="right:472.0px;transform:scaleX(0.935);transform-origin:100% 50%;top:200.13px;height:13px;line-height:13px;font-size:11px;color:#10222a;font-weight:normal;font-family:'Liberation Sans',sans-serif;">44,240</span>
<span id="t93" class="t" style="right:417.8px;transform:scaleX(0.935);transform-origin:100% 50%;top:200.13px;height:13px;line-height:13px;font-size:11px;color:#10222a;font-weight:normal;font-family:'Liberation Sans',sans-serif;">69,350</span>
<span id="t94" class="t" style="right:353.79999999999995px;transform:scaleX(0.935);transform-origin:100% 50%;top:200.13px;height:13px;line-height:13px;font-size:11px;color:#10222a;font-weight:normal;font-family:'Liberation Sans',sans-serif;">210,000</span>
<span id="t95" class="t" style="right:290.79999999999995px;transform:scaleX(0.935);transform-origin:100% 50%;top:200.13px;height:13px;line-height:13px;font-size:11px;color:#10222a;font-weight:normal;font-family:'Liberation Sans',sans-serif;">147,000</span>
<span id="t96" class="t" style="right:226.79999999999995px;transform:scaleX(0.935);transform-origin:100% 50%;top:200.13px;height:13px;line-height:13px;font-size:11px;color:#10222a;font-weight:normal;font-family:'Liberation Sans',sans-serif;">288,100</span>
<span id="t97" class="t" style="right:163.59999999999997px;transform:scaleX(0.935);transform-origin:100% 50%;top:200.13px;height:13px;line-height:13px;font-size:11px;color:#10222a;font-weight:normal;font-family:'Liberation Sans',sans-serif;">758,690</span>
<span id="t98" class="t" style="left:33px;top:213.16px;height:13px;line-height:13px;font-size:11px;color:#fff;font-weight:normal;font-family:'Liberation Sans','IPAGothic','Noto Sans CJK JP',sans-serif;transform:scaleX(1.0000);transform-origin:0 50%;">△△△物産</span>
<span id="t99" class="t" style="right:472.0px;transform:scaleX(0.935);transform-origin:100% 50%;top:213.56px;height:13px;line-height:13px;font-size:11px;color:#10222a;font-weight:normal;font-family:'Liberation Sans',sans-serif;">53,720</span>
<span id="t100" class="t" style="right:417.8px;transform:scaleX(0.935);transform-origin:100% 50%;top:213.56px;height:13px;line-height:13px;font-size:11px;color:#10222a;font-weight:normal;font-family:'Liberation Sans',sans-serif;">16,800</span>
<span id="t101" class="t" style="right:353.79999999999995px;transform:scaleX(0.935);transform-origin:100% 50%;top:213.56px;height:13px;line-height:13px;font-size:11px;color:#10222a;font-weight:normal;font-family:'Liberation Sans',sans-serif;">302,400</span>
<span id="t102" class="t" style="right:290.79999999999995px;transform:scaleX(0.935);transform-origin:100% 50%;top:213.56px;height:13px;line-height:13px;font-size:11px;color:#10222a;font-weight:normal;font-family:'Liberation Sans',sans-serif;">597,480</span>
<span id="t103" class="t" style="right:226.79999999999995px;transform:scaleX(0.935);transform-origin:100% 50%;top:213.56px;height:13px;line-height:13px;font-size:11px;color:#10222a;font-weight:normal;font-family:'Liberation Sans',sans-serif;">113,900</span>
<span id="t104" class="t" style="right:163.59999999999997px;transform:scaleX(0.935);transform-origin:100% 50%;top:213.56px;height:13px;line-height:13px;font-size:11px;color:#10222a;font-weight:normal;font-family:'Liberation Sans',sans-serif;">1,084,300</span>
<span id="t105" class="t" style="left:32.4px;top:226.59px;height:13px;line-height:13px;font-size:11px;color:#fff;font-weight:normal;font-family:'Liberation Sans','IPAGothic','Noto Sans CJK JP',sans-serif;transform:scaleX(1.0136);transform-origin:0 50%;"><span style="display:inline-block;width:11px;height:13px;line-height:13px;text-align:center;font-size:21.5px;vertical-align:top;position:relative;top:0.5px">○</span><span style="display:inline-block;width:11px;height:13px;line-height:13px;text-align:center;font-size:21.5px;vertical-align:top;position:relative;top:0.5px">○</span>会社</span>
<span id="t106" class="t" style="right:472.0px;transform:scaleX(0.935);transform-origin:100% 50%;top:227.00px;height:13px;line-height:13px;font-size:11px;color:#10222a;font-weight:normal;font-family:'Liberation Sans',sans-serif;">48,980</span>
<span id="t107" class="t" style="right:417.8px;transform:scaleX(0.935);transform-origin:100% 50%;top:227.00px;height:13px;line-height:13px;font-size:11px;color:#10222a;font-weight:normal;font-family:'Liberation Sans',sans-serif;">10,500</span>
<span id="t108" class="t" style="right:353.79999999999995px;transform:scaleX(0.935);transform-origin:100% 50%;top:227.00px;height:13px;line-height:13px;font-size:11px;color:#10222a;font-weight:normal;font-family:'Liberation Sans',sans-serif;">75,600</span>
<span id="t109" class="t" style="right:290.79999999999995px;transform:scaleX(0.935);transform-origin:100% 50%;top:227.00px;height:13px;line-height:13px;font-size:11px;color:#10222a;font-weight:normal;font-family:'Liberation Sans',sans-serif;">176,400</span>
<span id="t110" class="t" style="right:226.79999999999995px;transform:scaleX(0.935);transform-origin:100% 50%;top:227.00px;height:13px;line-height:13px;font-size:11px;color:#10222a;font-weight:normal;font-family:'Liberation Sans',sans-serif;">308,200</span>
<span id="t111" class="t" style="right:163.59999999999997px;transform:scaleX(0.935);transform-origin:100% 50%;top:227.00px;height:13px;line-height:13px;font-size:11px;color:#10222a;font-weight:normal;font-family:'Liberation Sans',sans-serif;">619,680</span>
<span id="t112" class="t" style="left:32.4px;top:240.02px;height:13px;line-height:13px;font-size:11px;color:#fff;font-weight:normal;font-family:'Liberation Sans','IPAGothic','Noto Sans CJK JP',sans-serif;transform:scaleX(1.0152);transform-origin:0 50%;"><span style="display:inline-block;width:11px;height:13px;line-height:13px;text-align:center;font-size:21.5px;vertical-align:top;position:relative;top:0.5px">○</span><span style="display:inline-block;width:11px;height:13px;line-height:13px;text-align:center;font-size:21.5px;vertical-align:top;position:relative;top:0.5px">○</span>株式会社</span>
<span id="t113" class="t" style="right:472.0px;transform:scaleX(0.935);transform-origin:100% 50%;top:240.42px;height:13px;line-height:13px;font-size:11px;color:#10222a;font-weight:normal;font-family:'Liberation Sans',sans-serif;">22,120</span>
<span id="t114" class="t" style="right:417.8px;transform:scaleX(0.935);transform-origin:100% 50%;top:240.42px;height:13px;line-height:13px;font-size:11px;color:#10222a;font-weight:normal;font-family:'Liberation Sans',sans-serif;">23,100</span>
<span id="t115" class="t" style="right:353.79999999999995px;transform:scaleX(0.935);transform-origin:100% 50%;top:240.42px;height:13px;line-height:13px;font-size:11px;color:#10222a;font-weight:normal;font-family:'Liberation Sans',sans-serif;">193,200</span>
<span id="t116" class="t" style="right:290.79999999999995px;transform:scaleX(0.935);transform-origin:100% 50%;top:240.42px;height:13px;line-height:13px;font-size:11px;color:#10222a;font-weight:normal;font-family:'Liberation Sans',sans-serif;">107,800</span>
<span id="t117" class="t" style="right:226.79999999999995px;transform:scaleX(0.935);transform-origin:100% 50%;top:240.42px;height:13px;line-height:13px;font-size:11px;color:#10222a;font-weight:normal;font-family:'Liberation Sans',sans-serif;">120,600</span>
<span id="t118" class="t" style="right:163.59999999999997px;transform:scaleX(0.935);transform-origin:100% 50%;top:240.42px;height:13px;line-height:13px;font-size:11px;color:#10222a;font-weight:normal;font-family:'Liberation Sans',sans-serif;">466,820</span>
<span id="t119" class="t" style="left:33.4px;top:253.45px;height:13px;line-height:13px;font-size:11px;color:#fff;font-weight:normal;font-family:'Liberation Sans','IPAGothic','Noto Sans CJK JP',sans-serif;transform:scaleX(1.0000);transform-origin:0 50%;">※※※貿易</span>
<span id="t120" class="t" style="right:472.0px;transform:scaleX(0.935);transform-origin:100% 50%;top:253.86px;height:13px;line-height:13px;font-size:11px;color:#10222a;font-weight:normal;font-family:'Liberation Sans',sans-serif;">14,220</span>
<span id="t121" class="t" style="right:417.8px;transform:scaleX(0.935);transform-origin:100% 50%;top:253.86px;height:13px;line-height:13px;font-size:11px;color:#10222a;font-weight:normal;font-family:'Liberation Sans',sans-serif;">22,050</span>
<span id="t122" class="t" style="right:353.79999999999995px;transform:scaleX(0.935);transform-origin:100% 50%;top:253.86px;height:13px;line-height:13px;font-size:11px;color:#10222a;font-weight:normal;font-family:'Liberation Sans',sans-serif;">260,400</span>
<span id="t123" class="t" style="right:290.79999999999995px;transform:scaleX(0.935);transform-origin:100% 50%;top:253.86px;height:13px;line-height:13px;font-size:11px;color:#10222a;font-weight:normal;font-family:'Liberation Sans',sans-serif;">294,000</span>
<span id="t124" class="t" style="right:226.79999999999995px;transform:scaleX(0.935);transform-origin:100% 50%;top:253.86px;height:13px;line-height:13px;font-size:11px;color:#10222a;font-weight:normal;font-family:'Liberation Sans',sans-serif;">341,700</span>
<span id="t125" class="t" style="right:163.59999999999997px;transform:scaleX(0.935);transform-origin:100% 50%;top:253.86px;height:13px;line-height:13px;font-size:11px;color:#10222a;font-weight:normal;font-family:'Liberation Sans',sans-serif;">932,370</span>
<span id="t126" class="t" style="left:33.4px;top:266.88px;height:13px;line-height:13px;font-size:11px;color:#fff;font-weight:bold;font-family:'Liberation Sans','IPAGothic','Noto Sans CJK JP',sans-serif;transform:scaleX(1.0000);transform-origin:0 50%;">総計</span>
<span id="t127" class="t" style="right:472.2px;top:267.19px;height:13px;line-height:13px;font-size:11px;color:#0c1a20;font-weight:bold;font-family:'Liberation Sans',sans-serif;letter-spacing:0.57px;">183,280</span>
<span id="t128" class="t" style="right:418.0px;top:267.19px;height:13px;line-height:13px;font-size:11px;color:#0c1a20;font-weight:bold;font-family:'Liberation Sans',sans-serif;letter-spacing:0.57px;">141,800</span>
<span id="t129" class="t" style="right:354.0px;top:267.19px;height:13px;line-height:13px;font-size:11px;color:#0c1a20;font-weight:bold;font-family:'Liberation Sans',sans-serif;letter-spacing:0.57px;">1,041,600</span>
<span id="t130" class="t" style="right:291.0px;top:267.19px;height:13px;line-height:13px;font-size:11px;color:#0c1a20;font-weight:bold;font-family:'Liberation Sans',sans-serif;letter-spacing:0.57px;">1,322,680</span>
<span id="t131" class="t" style="right:227.0px;top:267.19px;height:13px;line-height:13px;font-size:11px;color:#0c1a20;font-weight:bold;font-family:'Liberation Sans',sans-serif;letter-spacing:0.57px;">1,172,500</span>
<span id="t132" class="t" style="right:163.8px;top:267.19px;height:13px;line-height:13px;font-size:11px;color:#0c1a20;font-weight:bold;font-family:'Liberation Sans',sans-serif;letter-spacing:0.57px;">3,861,860</span>
<div style="left:5.4px;top:113px;width:0.9px;height:375px;background:#adb3bc;"></div>
<div style="left:622.2px;top:131px;width:11.6px;height:326.8px;background:linear-gradient(90deg,#dfe3e9,#e9ecf1 50%,#dde1e8);"></div>
<div style="left:622.5px;top:131.6px;width:10.799999999999999px;height:5.8px;background:#fcfcfd;border:1px solid #8e949e;border-radius:1px;"></div>
<div style="left:625.2px;top:134px;width:5.6px;height:1px;background:#a9aeb7;"></div>
<svg style="left:624.4000000000001px;top:141.6px" width="8" height="5" viewBox="0 0 8 5"><path d="M0.4 4.4 L4 0.4 L7.6 4.4 Z" fill="#444"/></svg>
<div style="left:622.8000000000001px;top:150.4px;width:10.2px;height:282px;background:linear-gradient(90deg,#f6f7f9,#eceef2 50%,#dfe2e8);border:1px solid #979eaa;border-radius:2px;"></div>
<div style="left:625.4000000000001px;top:288.2px;width:5.199999999999999px;height:1.2px;background:#8e96a3;"></div>
<div style="left:625.4000000000001px;top:290.7px;width:5.199999999999999px;height:1.2px;background:#8e96a3;"></div>
<div style="left:625.4000000000001px;top:293.2px;width:5.199999999999999px;height:1.2px;background:#8e96a3;"></div>
<svg style="left:624.4000000000001px;top:449.6px" width="8" height="5" viewBox="0 0 8 5"><path d="M0.4 0.6 L7.6 0.6 L4 4.6 Z" fill="#444"/></svg>
<div style="left:6.4px;top:457.8px;width:627.4px;height:12.399999999999977px;background:linear-gradient(#d9dde5,#cfd4dd);border-top:1px solid #a7aebb;"></div>
<div style="left:6.4px;top:457.8px;width:46px;height:12.399999999999977px;background:linear-gradient(#eef0f4,#dfe3e9);border-top:1px solid #a7aebb;"></div>
<svg style="left:9.6px;top:459.8px" width="7" height="8" viewBox="0 0 7 8"><rect x="0.4" y="0.6" width="1.1" height="6.4" fill="#444"/><path d="M6 0.6 V7 L2 3.8 Z" fill="#4a4a4a"/></svg>
<svg style="left:21px;top:459.8px" width="7" height="8" viewBox="0 0 7 8"><path d="M5 0.6 V7 L1 3.8 Z" fill="#444"/></svg>
<svg style="left:32.6px;top:459.8px" width="7" height="8" viewBox="0 0 7 8"><path d="M1 0.6 V7 L5 3.8 Z" fill="#444"/></svg>
<svg style="left:42.6px;top:459.8px" width="7" height="8" viewBox="0 0 7 8"><path d="M0.4 0.6 V7 L4.4 3.8 Z" fill="#444"/><rect x="4.9" y="0.6" width="1.1" height="6.4" fill="#444"/></svg>
<svg style="left:50px;top:457.3px" width="145" height="13.2" viewBox="0 0 145 13.2"><path d="M44 12.6 L50.4 1.4 Q50.9 0.6 52 0.6 H113 L108.6 12.6 Z" fill="#e4e7ec" stroke="#8f97a5" stroke-width="0.8"/>
<path d="M108.6 12.6 L115 1.4 Q115.5 0.6 116.6 0.6 H137 L130.6 12.6 Z" fill="#dde1e7" stroke="#8f97a5" stroke-width="0.8"/>
<path d="M2.4 0.4 H50.6 L44.4 11.6 Q43.8 12.6 42.6 12.6 H6.6 Q5.4 12.6 5 11.6 Z" fill="#ffffff" stroke="#8f97a5" stroke-width="0.8"/><path d="M2.8 0.4 H50.2" stroke="#fff" stroke-width="1.2"/></svg>
<span id="t133" class="t" style="left:59.6px;top:457.85px;height:13.5px;line-height:13.5px;font-size:9.5px;color:#333;font-weight:normal;transform:scaleX(0.9892);transform-origin:0 50%;">Sheet1</span>
<span id="t134" class="t" style="left:101.4px;top:457.60px;height:14px;line-height:14px;font-size:10px;color:#222;font-weight:normal;font-family:'Liberation Sans','IPAGothic','Noto Sans CJK JP',sans-serif;transform:scaleX(1.0520);transform-origin:0 50%;">売上集計表</span>
<svg style="left:167.5px;top:459.6px" width="13" height="10" viewBox="0 0 13 10"><rect x="3" y="2.6" width="9" height="6.4" rx="0.8" fill="#eef3fb" stroke="#4f6faa" stroke-width="0.9"/><path d="M3 4.6 H12" stroke="#8fa8d4" stroke-width="0.8"/><path d="M2.6 0.4 L3.4 2 L5 2.6 L3.4 3.4 L2.6 5 L1.8 3.4 L0.2 2.6 L1.8 2 Z" fill="#f2b632" stroke="#b47d10" stroke-width="0.4"/></svg>
<div style="left:376px;top:457.8px;width:246.2px;height:12.399999999999977px;background:linear-gradient(#d9dde5,#e7eaef 50%,#d9dde5);border-top:1px solid #a7aebb;"></div>
<div style="left:376.4px;top:458.6px;width:4.8px;height:11.199999999999978px;background:#fcfcfd;border:1px solid #7f8794;"></div>
<div style="left:378.4px;top:460.8px;width:0.8px;height:6.799999999999978px;background:#a0a6b0;"></div>
<svg style="left:384.4px;top:460.4px" width="5" height="8" viewBox="0 0 5 8"><path d="M4.4 0.4 V7.2 L0.6 3.8 Z" fill="#444"/></svg>
<div style="left:394.6px;top:459.0px;width:185px;height:10.599999999999977px;background:linear-gradient(#f7f8fa,#eceef2 50%,#dde1e7);border:1px solid #979eaa;border-radius:2px;"></div>
<div style="left:485.4px;top:461.6px;width:1px;height:5.4px;background:#8e96a3;"></div>
<div style="left:487.4px;top:461.6px;width:1px;height:5.4px;background:#8e96a3;"></div>
<div style="left:489.4px;top:461.6px;width:1px;height:5.4px;background:#8e96a3;"></div>
<svg style="left:607.6px;top:460.6px" width="5" height="8" viewBox="0 0 5 8"><path d="M0.6 0.4 V7.2 L4.4 3.8 Z" fill="#444"/></svg>
<div style="left:616px;top:458.6px;width:5.6px;height:11.199999999999978px;background:#fcfcfd;border:1px solid #555c66;"></div>
<div style="left:618.4px;top:460.8px;width:0.9px;height:6.799999999999978px;background:#555c66;"></div>
<div style="left:622.2px;top:457.8px;width:11.6px;height:12.399999999999977px;background:#dfe3e9;"></div>
<div style="left:5.4px;top:469.8px;width:628.6px;height:18.200000000000035px;background:linear-gradient(#f6f7f9 0px,#e6e8eb 1.4px,#dadce0 5px,#cdd0d5 10px,#d0d3d8 14px,#d7d9de 16.6px,#a4a9b1 17.2px);border-left:1px solid #adb2bb;"></div>
<span id="t135" class="t" style="left:12.4px;top:472.50px;height:13px;line-height:13px;font-size:9px;color:#222;font-weight:normal;transform:scaleX(0.7219);transform-origin:0 50%;">コマンド</span>
<div style="left:45px;top:472px;width:1px;height:14px;background:#a9afba;"></div>
<div style="left:46px;top:472px;width:1px;height:14px;background:#f4f5f8;"></div>
<div style="left:435.6px;top:472px;width:1px;height:14px;background:#a9afba;"></div>
<div style="left:436.6px;top:472px;width:1px;height:14px;background:#f4f5f8;"></div>
<div style="left:441px;top:471.6px;width:12.8px;height:13.6px;background:linear-gradient(#fde9a0,#fbd25e 50%,#f9c843);border:1px solid #c9963a;border-radius:1.5px;"></div>
<svg style="left:443.4px;top:474.4px" width="9" height="9" viewBox="0 0 9 9"><rect x="0.5" y="0.5" width="7.6" height="7" fill="#fff" stroke="#555" stroke-width="0.8"/><path d="M0.5 2.8 H8.1 M0.5 5.2 H8.1 M3 0.5 V7.5 M5.6 0.5 V7.5" stroke="#555" stroke-width="0.7"/></svg>
<svg style="left:457.6px;top:474px" width="10" height="10" viewBox="0 0 10 10"><rect x="0.5" y="0.5" width="8.4" height="8" fill="#eceef2" stroke="#555" stroke-width="0.9"/><rect x="2.4" y="2.2" width="4.6" height="4.8" fill="#fff" stroke="#666" stroke-width="0.7"/></svg>
<svg style="left:470.6px;top:474px" width="11" height="10" viewBox="0 0 11 10"><rect x="0.5" y="0.5" width="9.4" height="8" fill="#f4f5f8" stroke="#555" stroke-width="0.9"/><path d="M3.4 0.5 V6 H7 V0.5 M0.5 6 H9.9" stroke="#555" stroke-width="0.9" fill="none"/></svg>
<span id="t136" class="t" style="left:491px;top:472.05px;height:13.5px;line-height:13.5px;font-size:9.5px;color:#222;font-weight:normal;transform:scaleX(0.9707);transform-origin:0 50%;">100%</span>
<svg style="left:520px;top:472.5px" width="12.4" height="12.4" viewBox="0 0 12.4 12.4"><circle cx="6.2" cy="6.2" r="5.4" fill="#fafbfc" stroke="#6c727c" stroke-width="1"/><path d="M3.4 6.2 H9" stroke="#333" stroke-width="1.5"/></svg>
<div style="left:532.6px;top:478.4px;width:74px;height:1px;background:#8a909b;"></div>
<div style="left:532.6px;top:479.4px;width:74px;height:0.8px;background:#f2f3f6;"></div>
<svg style="left:566.6px;top:473px" width="7" height="11" viewBox="0 0 7 11"><path d="M0.7 0.6 H6.3 V6.6 L3.5 10 L0.7 6.6 Z" fill="#f4f5f8" stroke="#6c727c" stroke-width="0.9"/></svg>
<svg style="left:607.6px;top:472.4px" width="12.4" height="12.4" viewBox="0 0 12.4 12.4"><circle cx="6.2" cy="6.2" r="5.4" fill="#fafbfc" stroke="#6c727c" stroke-width="1"/><path d="M3.2 6.2 H9.2 M6.2 3.2 V9.2" stroke="#333" stroke-width="1.5"/></svg>
<div style="left:631px;top:478.6px;width:1.2px;height:1.2px;background:#9aa0aa;"></div>
<div style="left:629px;top:480.6px;width:1.2px;height:1.2px;background:#9aa0aa;"></div>
<div style="left:631px;top:480.6px;width:1.2px;height:1.2px;background:#9aa0aa;"></div>
<div style="left:627px;top:482.6px;width:1.2px;height:1.2px;background:#9aa0aa;"></div>
<div style="left:629px;top:482.6px;width:1.2px;height:1.2px;background:#9aa0aa;"></div>
<div style="left:631px;top:482.6px;width:1.2px;height:1.2px;background:#9aa0aa;"></div>
<div style="left:625px;top:484.6px;width:1.2px;height:1.2px;background:#9aa0aa;"></div>
<div style="left:627px;top:484.6px;width:1.2px;height:1.2px;background:#9aa0aa;"></div>
<div style="left:629px;top:484.6px;width:1.2px;height:1.2px;background:#9aa0aa;"></div>
<div style="left:631px;top:484.6px;width:1.2px;height:1.2px;background:#9aa0aa;"></div>
</div></body></html>
